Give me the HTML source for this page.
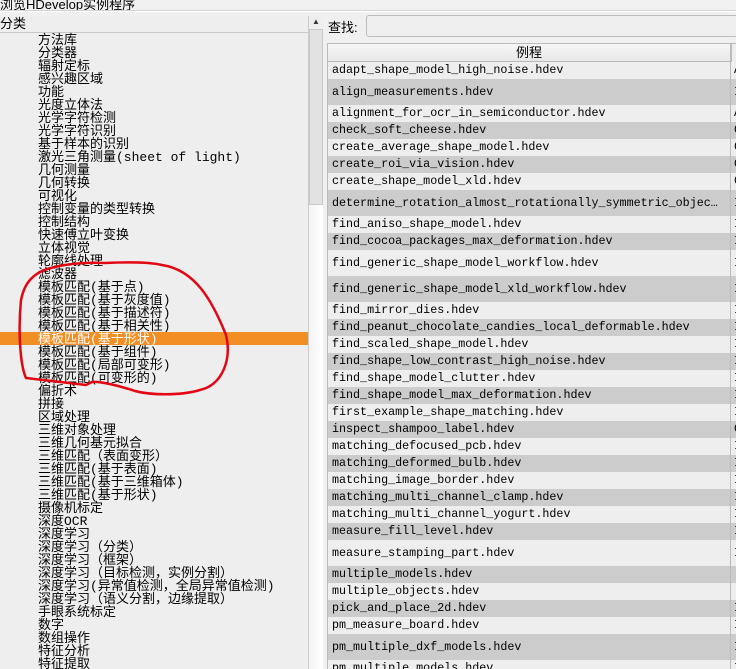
<!DOCTYPE html>
<html><head><meta charset="utf-8"><style>
*{margin:0;padding:0;box-sizing:border-box}
body{width:736px;height:669px;overflow:hidden;background:#f0f0f0;position:relative;font-family:"Liberation Sans","Noto Sans CJK SC",sans-serif}
.t{position:absolute;left:0;top:-6px;font-size:13px;color:#000;white-space:nowrap}
.tl{position:absolute;left:0;top:10px;width:736px;height:2px;background:#d4d4d4;border-bottom:1px solid #fff}
#left{position:absolute;left:0;top:16px;width:308px;height:653px;background:#eeeeee;overflow:hidden}
#lh{height:17px;border-bottom:1px solid #c8c8c8;font-size:13px;line-height:16px;padding-left:0;background:#eeeeee}
.it{position:absolute;left:0;width:308px;height:13px;font-size:13px;line-height:15px;padding-left:38px;white-space:nowrap;color:#000;font-family:"Liberation Mono","Noto Sans CJK SC",monospace}
.sel{background:#f28f24;color:#fff}
#sb{position:absolute;left:308px;top:16px;width:15px;height:653px;background:linear-gradient(90deg,#f4f4f4,#fff);border-left:1px solid #ccc}
#sbu{position:absolute;left:0;top:0;width:14px;height:13px;background:#eee;font-size:8px;text-align:center;line-height:12px;color:#333}
#sbt{position:absolute;left:0;top:13px;width:14px;height:176px;background:#e2e2e2;border:1px solid #c8c8c8}
#find{position:absolute;left:328px;top:17px;font-size:13px}
#inp{position:absolute;left:366px;top:15px;width:372px;height:22px;border:1px solid #bcbcbc;border-radius:3px;background:#efefef}
#tbl{position:absolute;left:327px;top:43px;width:409px;height:626px;border-left:1px solid #bbb;border-top:1px solid #bbb;overflow:hidden;background:#eee}
#th{height:18px;border-bottom:1px solid #bbb;background:linear-gradient(#f6f6f6,#e8e8e8);font-size:13px;text-align:center;line-height:17px;width:403px;border-right:1px solid #bbb}
.r{position:relative;width:409px;font-family:"Liberation Mono",monospace;font-size:11.7px;color:#000;padding-left:4px;white-space:nowrap;border-right:0}
.r span{position:absolute;left:406px;top:0}
.a{background:#eeeeee}.b{background:#cccccc}
.cd{position:absolute;left:403px;top:0;width:1px;height:18px;background:#bbb}
svg{position:absolute;left:0;top:0}
</style></head><body>
<div class="t">浏览HDevelop实例程序</div>
<div class="tl"></div>
<div id="left">
<div id="lh">分类</div>
<div class="it" style="top:17px">方法库</div>
<div class="it" style="top:30px">分类器</div>
<div class="it" style="top:43px">辐射定标</div>
<div class="it" style="top:56px">感兴趣区域</div>
<div class="it" style="top:69px">功能</div>
<div class="it" style="top:82px">光度立体法</div>
<div class="it" style="top:95px">光学字符检测</div>
<div class="it" style="top:108px">光学字符识别</div>
<div class="it" style="top:121px">基于样本的识别</div>
<div class="it" style="top:134px">激光三角测量(sheet of light)</div>
<div class="it" style="top:147px">几何测量</div>
<div class="it" style="top:160px">几何转换</div>
<div class="it" style="top:173px">可视化</div>
<div class="it" style="top:186px">控制变量的类型转换</div>
<div class="it" style="top:199px">控制结构</div>
<div class="it" style="top:212px">快速傅立叶变换</div>
<div class="it" style="top:225px">立体视觉</div>
<div class="it" style="top:238px">轮廓线处理</div>
<div class="it" style="top:251px">滤波器</div>
<div class="it" style="top:264px">模板匹配(基于点)</div>
<div class="it" style="top:277px">模板匹配(基于灰度值)</div>
<div class="it" style="top:290px">模板匹配(基于描述符)</div>
<div class="it" style="top:303px">模板匹配(基于相关性)</div>
<div class="it sel" style="top:316px">模板匹配(基于形状)</div>
<div class="it" style="top:329px">模板匹配(基于组件)</div>
<div class="it" style="top:342px">模板匹配(局部可变形)</div>
<div class="it" style="top:355px">模板匹配(可变形的)</div>
<div class="it" style="top:368px">偏折术</div>
<div class="it" style="top:381px">拼接</div>
<div class="it" style="top:394px">区域处理</div>
<div class="it" style="top:407px">三维对象处理</div>
<div class="it" style="top:420px">三维几何基元拟合</div>
<div class="it" style="top:433px">三维匹配（表面变形）</div>
<div class="it" style="top:446px">三维匹配(基于表面)</div>
<div class="it" style="top:459px">三维匹配(基于三维箱体)</div>
<div class="it" style="top:472px">三维匹配(基于形状)</div>
<div class="it" style="top:485px">摄像机标定</div>
<div class="it" style="top:498px">深度OCR</div>
<div class="it" style="top:511px">深度学习</div>
<div class="it" style="top:524px">深度学习（分类）</div>
<div class="it" style="top:537px">深度学习（框架）</div>
<div class="it" style="top:550px">深度学习（目标检测，实例分割）</div>
<div class="it" style="top:563px">深度学习(异常值检测，全局异常值检测)</div>
<div class="it" style="top:576px">深度学习（语义分割，边缘提取）</div>
<div class="it" style="top:589px">手眼系统标定</div>
<div class="it" style="top:602px">数字</div>
<div class="it" style="top:615px">数组操作</div>
<div class="it" style="top:628px">特征分析</div>
<div class="it" style="top:641px">特征提取</div>
</div>
<div id="sb"><div id="sbu">▲</div><div id="sbt"></div></div>
<div id="find">查找:</div>
<div id="inp"></div>
<div id="tbl">
<div id="th">例程</div>
<div class="r a" style="height:17px;line-height:17px">adapt_shape_model_high_noise.hdev<span>A</span></div>
<div class="r b" style="height:26px;line-height:26px">align_measurements.hdev<span>I</span></div>
<div class="r a" style="height:17px;line-height:17px">alignment_for_ocr_in_semiconductor.hdev<span>A</span></div>
<div class="r b" style="height:17px;line-height:17px">check_soft_cheese.hdev<span>C</span></div>
<div class="r a" style="height:17px;line-height:17px">create_average_shape_model.hdev<span>C</span></div>
<div class="r b" style="height:17px;line-height:17px">create_roi_via_vision.hdev<span>C</span></div>
<div class="r a" style="height:17px;line-height:17px">create_shape_model_xld.hdev<span>C</span></div>
<div class="r b" style="height:26px;line-height:26px">determine_rotation_almost_rotationally_symmetric_objec…<span>I</span></div>
<div class="r a" style="height:17px;line-height:17px">find_aniso_shape_model.hdev<span>I</span></div>
<div class="r b" style="height:17px;line-height:17px">find_cocoa_packages_max_deformation.hdev<span>I</span></div>
<div class="r a" style="height:26px;line-height:26px">find_generic_shape_model_workflow.hdev<span>I</span></div>
<div class="r b" style="height:26px;line-height:26px">find_generic_shape_model_xld_workflow.hdev<span>I</span></div>
<div class="r a" style="height:17px;line-height:17px">find_mirror_dies.hdev<span>I</span></div>
<div class="r b" style="height:17px;line-height:17px">find_peanut_chocolate_candies_local_deformable.hdev<span>I</span></div>
<div class="r a" style="height:17px;line-height:17px">find_scaled_shape_model.hdev<span>I</span></div>
<div class="r b" style="height:17px;line-height:17px">find_shape_low_contrast_high_noise.hdev<span>I</span></div>
<div class="r a" style="height:17px;line-height:17px">find_shape_model_clutter.hdev<span>I</span></div>
<div class="r b" style="height:17px;line-height:17px">find_shape_model_max_deformation.hdev<span>I</span></div>
<div class="r a" style="height:17px;line-height:17px">first_example_shape_matching.hdev<span>I</span></div>
<div class="r b" style="height:17px;line-height:17px">inspect_shampoo_label.hdev<span>C</span></div>
<div class="r a" style="height:17px;line-height:17px">matching_defocused_pcb.hdev<span>I</span></div>
<div class="r b" style="height:17px;line-height:17px">matching_deformed_bulb.hdev<span>I</span></div>
<div class="r a" style="height:17px;line-height:17px">matching_image_border.hdev<span>I</span></div>
<div class="r b" style="height:17px;line-height:17px">matching_multi_channel_clamp.hdev<span>I</span></div>
<div class="r a" style="height:17px;line-height:17px">matching_multi_channel_yogurt.hdev<span>I</span></div>
<div class="r b" style="height:17px;line-height:17px">measure_fill_level.hdev<span>I</span></div>
<div class="r a" style="height:26px;line-height:26px">measure_stamping_part.hdev<span>I</span></div>
<div class="r b" style="height:17px;line-height:17px">multiple_models.hdev<span>:</span></div>
<div class="r a" style="height:17px;line-height:17px">multiple_objects.hdev<span>:</span></div>
<div class="r b" style="height:17px;line-height:17px">pick_and_place_2d.hdev<span>I</span></div>
<div class="r a" style="height:17px;line-height:17px">pm_measure_board.hdev<span>I</span></div>
<div class="r b" style="height:26px;line-height:26px">pm_multiple_dxf_models.hdev<span>I</span></div>
<div class="r a" style="height:17px;line-height:17px">pm_multiple_models.hdev<span>I</span></div>
<div class="cd"></div>
</div>
<div style="position:absolute;left:730px;top:44px;width:1px;height:625px;background:#bbb"></div>
<svg width="736" height="669"><path d="M33,277 C45,265 80,262 105,263 C125,262 150,262 162,265 C195,270 212,300 226,335 C232,360 222,385 200,390 C180,396 150,395 135,391 C120,386 100,381 92,382 L86,385 L26,378 C20,365 18,330 21,300 C23,290 27,282 33,277 Z" fill="none" stroke="#e30613" stroke-width="2.5"/></svg>
</body></html>
